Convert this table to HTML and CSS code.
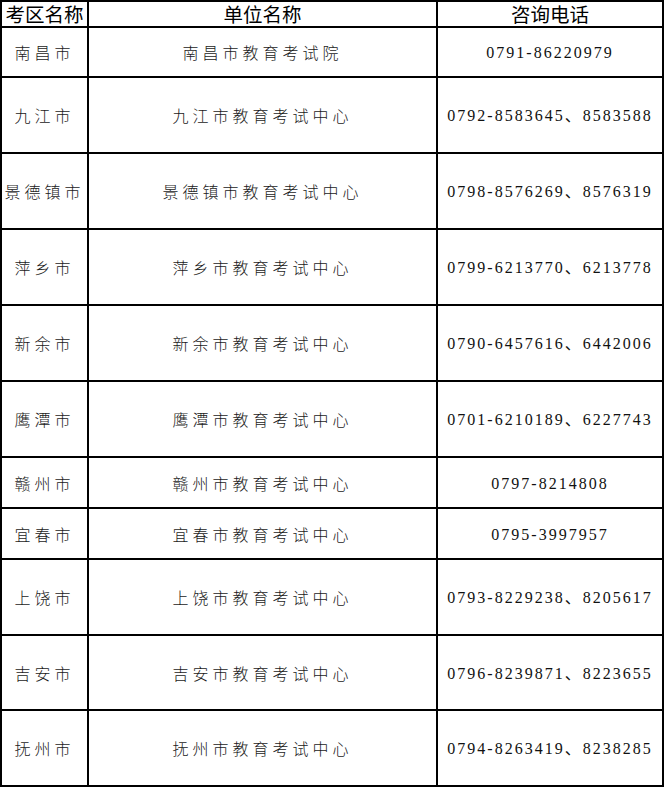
FILE: index.html
```html
<!DOCTYPE html>
<html lang="zh-CN">
<head>
<meta charset="utf-8">
<title>各考区咨询电话</title>
<link rel="stylesheet" href="styles.css">
</head>
<body>
<table class="contacts">
  <colgroup>
    <col class="col-area">
    <col class="col-unit">
    <col class="col-phone">
  </colgroup>
  <thead>
    <tr class="row-head">
      <th>考区名称</th>
      <th>单位名称</th>
      <th>咨询电话</th>
    </tr>
  </thead>
  <tbody>
    <tr class="row-50"><td>南昌市</td><td>南昌市教育考试院</td><td><span class="num">0791-86220979</span></td></tr>
    <tr class="row-76"><td>九江市</td><td>九江市教育考试中心</td><td><span class="num">0792-8583645、8583588</span></td></tr>
    <tr class="row-76"><td>景德镇市</td><td>景德镇市教育考试中心</td><td><span class="num">0798-8576269、8576319</span></td></tr>
    <tr class="row-76"><td>萍乡市</td><td>萍乡市教育考试中心</td><td><span class="num">0799-6213770、6213778</span></td></tr>
    <tr class="row-76"><td>新余市</td><td>新余市教育考试中心</td><td><span class="num">0790-6457616、6442006</span></td></tr>
    <tr class="row-76"><td>鹰潭市</td><td>鹰潭市教育考试中心</td><td><span class="num">0701-6210189、6227743</span></td></tr>
    <tr class="row-51"><td>赣州市</td><td>赣州市教育考试中心</td><td><span class="num">0797-8214808</span></td></tr>
    <tr class="row-51"><td>宜春市</td><td>宜春市教育考试中心</td><td><span class="num">0795-3997957</span></td></tr>
    <tr class="row-76"><td>上饶市</td><td>上饶市教育考试中心</td><td><span class="num">0793-8229238、8205617</span></td></tr>
    <tr class="row-75"><td>吉安市</td><td>吉安市教育考试中心</td><td><span class="num">0796-8239871、8223655</span></td></tr>
    <tr class="row-76"><td>抚州市</td><td>抚州市教育考试中心</td><td><span class="num">0794-8263419、8238285</span></td></tr>
  </tbody>
</table>
</body>
</html>
```
FILE: styles.css
```css
html, body {
  margin: 0;
  padding: 0;
  background: #fff;
}

.contacts {
  border-collapse: separate;
  border-spacing: 0;
  table-layout: fixed;
  width: 664px;
  border-left: 2px solid #000;
  border-top: 2px solid #000;
  font-family: "Noto Sans CJK SC", sans-serif;
  color: #1a1a1a;
}

.col-area { width: 87px; }
.col-unit { width: 349px; }
.col-phone { width: 226px; }

.contacts th,
.contacts td {
  box-sizing: border-box;
  padding: 0;
  border-right: 2px solid #000;
  border-bottom: 2px solid #000;
  text-align: center;
  vertical-align: middle;
  white-space: nowrap;
}

.contacts th {
  font-size: 19.5px;
  font-weight: 400;
  line-height: 22px;
  color: #000;
}

.contacts td {
  font-size: 16px;
  font-weight: 300;
  line-height: 20px;
  letter-spacing: 4px;
}

.contacts .num {
  font-family: "Liberation Serif", "Noto Sans CJK SC", serif;
  font-weight: 400;
  letter-spacing: 2px;
  color: #111;
}

.row-head th { height: 26px; }
.row-50 td { height: 50px; }
.row-51 td { height: 51px; }
.row-75 td { height: 75px; }
.row-76 td { height: 76px; }
```
